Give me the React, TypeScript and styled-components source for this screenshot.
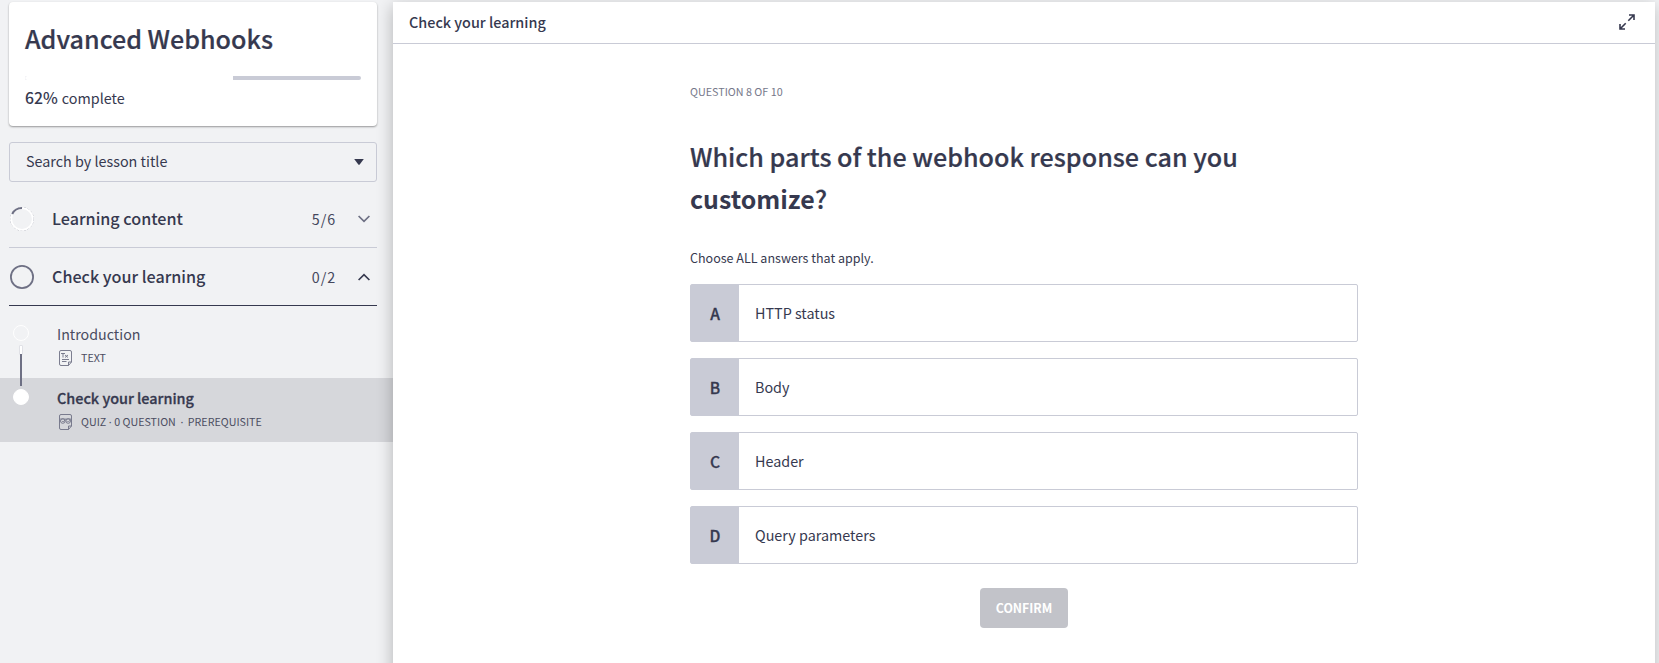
import React from "react";
import styled, { createGlobalStyle } from "styled-components";

const ink = "#36394f";
const soft = "#6e7084";
const line = "#c9cbd6";

const GlobalStyle = createGlobalStyle`
  * { box-sizing: border-box; }
  body {
    margin: 0;
    overflow: hidden;
    background: #f1f2f4;
    color: ${ink};
    font-family: "Noto Sans CJK SC", "Noto Sans", sans-serif;
  }
  h1, h2, p { margin: 0; }
`;

const Page = styled.div`
  display: flex;
  height: 663px;
  width: 1659px;
  overflow: hidden;
`;

const Sidebar = styled.aside`
  width: 393px;
  flex: none;
  padding-top: 2px;
`;

const CourseCard = styled.section`
  width: 368px;
  height: 124px;
  margin-left: 9px;
  padding: 18px 16px 0;
  background: #fff;
  border-radius: 4px;
  box-shadow: 0 1px 2px rgba(0, 0, 0, 0.38);
`;

const CourseTitle = styled.h1`
  font-size: 25.1px;
  font-weight: 500;
  line-height: 36px;
  -webkit-text-stroke: 0.2px ${ink};
`;

const ProgressTrack = styled.div`
  height: 4px;
  margin-top: 20px;
  border-radius: 2px;
  background: ${line};
  overflow: hidden;
`;

const ProgressFill = styled.div`
  height: 100%;
  background: #fff;
`;

const ProgressText = styled.p`
  margin-top: 6px;
  font-size: 14.35px;
  line-height: 24px;
  white-space: pre;
  strong {
    font-size: 15.8px;
    font-weight: 500;
    line-height: 20px;
    margin-right: 4px;
  }
`;

const LessonSelect = styled.div`
  display: flex;
  align-items: center;
  justify-content: space-between;
  width: 368px;
  height: 40px;
  margin: 16px 0 8px 9px;
  padding: 0 12px 2px 16px;
  border: 1px solid ${line};
  border-radius: 3px;
  font-size: 14.35px;
  line-height: 20px;
  svg { position: relative; top: 1px; }
`;

const SectionRow = styled.div<{ $open?: boolean }>`
  display: flex;
  align-items: center;
  width: 368px;
  height: 58px;
  margin-left: 9px;
  padding-right: 7px;
  border-bottom: 1px solid ${(p) => (p.$open ? ink : line)};
  > svg { flex: none; }
`;

const SectionName = styled.span`
  flex: 1;
  margin-left: 18px;
  padding-bottom: 1px;
  font-size: 16.15px;
  font-weight: 500;
  line-height: 24px;
`;

const SectionCount = styled.span`
  margin-right: 22px;
  font-size: 14.3px;
  letter-spacing: 0.9px;
  line-height: 24px;
  color: #45485d;
`;

const LessonList = styled.div`
  padding-top: 8px;
`;

const Lesson = styled.div<{ $active?: boolean }>`
  display: flex;
  height: 64px;
  background: ${(p) => (p.$active ? "#d6d7db" : "transparent")};
`;

const Rail = styled.div<{ $first?: boolean }>`
  display: flex;
  flex-direction: column;
  align-items: center;
  width: 16px;
  margin-left: 13px;
  padding-top: ${(p) => (p.$first ? 11 : 0)}px;
`;

const Dot = styled.div<{ $filled?: boolean; $gap?: number }>`
  flex: none;
  width: 16px;
  height: 16px;
  margin-bottom: ${(p) => p.$gap ?? 0}px;
  border: 1px solid #fff;
  border-radius: 50%;
  background: ${(p) => (p.$filled ? "#fff" : "transparent")};
`;

const Connector = styled.div<{ $h: number; $done?: boolean; $gap?: number }>`
  flex: none;
  width: 2px;
  height: ${(p) => p.$h}px;
  margin-bottom: ${(p) => p.$gap ?? 0}px;
  background: ${(p) => (p.$done ? "#fff" : soft)};
  box-shadow: ${(p) => (p.$done ? "0 0 0 0.5px #cfd0d8" : "none")};
`;

const LessonBody = styled.div`
  padding: 10px 0 0 28px;
`;

const LessonTitle = styled.div<{ $active?: boolean }>`
  font-size: ${(p) => (p.$active ? 14.42 : 14.25)}px;
  font-weight: ${(p) => (p.$active ? 500 : 400)};
  line-height: 20px;
  color: ${(p) => (p.$active ? ink : "#494b60")};
  -webkit-text-stroke: ${(p) => (p.$active ? "0.3px" : "0")} ${ink};
`;

const LessonMeta = styled.div`
  display: flex;
  align-items: center;
  height: 16px;
  margin-top: 6px;
  font-size: 10.7px;
  line-height: 16px;
  color: #4b4d61;
  svg { margin: 0 9px 0 2px; }
`;

const Bullet = styled.span<{ $w: number }>`
  width: ${(p) => p.$w}px;
  text-align: center;
  font-family: "Noto Sans", sans-serif;
`;

const Main = styled.main`
  position: relative;
  width: 1262px;
  height: 680px;
  flex: none;
  margin-top: 2px;
  background: #fff;
  box-shadow: -1px 4px 15px rgba(0, 0, 0, 0.24);
`;

const TopBar = styled.header`
  display: flex;
  align-items: center;
  justify-content: space-between;
  height: 42px;
  padding: 0 20px 2px 16px;
  border-bottom: 1px solid ${line};
  font-size: 14.4px;
  font-weight: 500;
  line-height: 20px;
`;

const Question = styled.section`
  display: flex;
  flex-direction: column;
  width: 668px;
  margin: 40px auto 0;
`;

const QuestionCount = styled.p`
  font-size: 10.75px;
  line-height: 16px;
  color: #76788a;
`;

const QuestionTitle = styled.h2`
  margin-top: 35px;
  font-size: 25.13px;
  font-weight: 500;
  line-height: 42px;
  white-space: nowrap;
  -webkit-text-stroke: 0.2px ${ink};
  b {
    font-size: 24.9px;
    font-weight: 700;
    line-height: 30px;
    -webkit-text-stroke: 0;
  }
`;

const Hint = styled.p`
  margin-top: 29px;
  font-size: 12.53px;
  line-height: 20px;
`;

const Options = styled.div`
  display: flex;
  flex-direction: column;
  gap: 16px;
  margin-top: 16px;
`;

const Option = styled.div`
  display: flex;
  height: 58px;
  border: 1px solid ${line};
  border-radius: 2px;
`;

const OptionKey = styled.div`
  display: flex;
  align-items: center;
  justify-content: center;
  width: 48px;
  background: ${line};
  font-size: 15.6px;
  font-weight: 500;
  line-height: 20px;
  padding-bottom: 1px;
  -webkit-text-stroke: 0.3px ${ink};
`;

const OptionLabel = styled.div`
  display: flex;
  align-items: center;
  padding-left: 16px;
  font-size: 14.35px;
  line-height: 20px;
`;

const ConfirmButton = styled.button`
  align-self: center;
  width: 88px;
  height: 40px;
  margin-top: 24px;
  padding: 0;
  border: 0;
  border-radius: 4px;
  background: #c2c3c9;
  color: #fff;
  font: 700 12.3px/20px "Noto Sans CJK SC", sans-serif;
`;

const Chevron = ({ up }: { up?: boolean }) => (
  <svg width="12" height="8" viewBox="0 0 12 8" fill="none" stroke={up ? ink : soft} strokeWidth="1.7">
    <path d={up ? "M.6 7 6 1.6 11.4 7" : "M.6 1 6 6.4 11.4 1"} />
  </svg>
);

const PartialRing = () => (
  <svg width="25" height="24" viewBox="0 0 25 24" fill="none">
    <circle cx="13" cy="12" r="11.5" stroke="#a9abb8" strokeWidth="1" strokeDasharray="2 1.5" />
    <circle cx="13" cy="12" r="10.8" stroke="#fff" strokeWidth="1.8" />
    <path d="M3.2 7A11 11 0 0 1 13 1" stroke={soft} strokeWidth="2" />
  </svg>
);

const EmptyRing = () => (
  <svg width="25" height="24" viewBox="0 0 25 24" fill="none">
    <circle cx="13" cy="12" r="11.1" stroke={soft} strokeWidth="1.8" />
  </svg>
);

const PageOutline = () => (
  <path d="M12.5 12V2Q12.5.5 11 .5H2Q.5.5.5 2v12Q.5 15.5 2 15.5H9.500L12.500 12H9.500V15.500" />
);

const TextIcon = () => (
  <svg width="13" height="16" viewBox="0 0 13 16" fill="none" stroke={soft} strokeWidth="0.9">
    <PageOutline />
    <path d="M2 3.500h4M4 3.500v4M6 5l3 2.500M9 5 6 7.500M3 9.500h7M3 11.500h4.500" />
  </svg>
);

const QuizIcon = () => (
  <svg width="13" height="16" viewBox="0 0 13 16" fill="none" stroke={soft} strokeWidth="0.9">
    <PageOutline />
    <circle cx="3.800" cy="7" r="2.300" />
    <circle cx="9.200" cy="7" r="2.300" />
    <path d="m3 7 1 1 2.600-2.600M8.300 7l1 1 2.500-2.600M1 5h11" strokeWidth="0.7" />
  </svg>
);

const ExpandIcon = () => (
  <svg width="16" height="16" viewBox="0 0 16 16" fill="none" stroke={ink} strokeWidth="1.6">
    <path d="M9.300 6.700 15 1M10 1h5v5M6.700 9.300 1 15M1 10v5h5" />
  </svg>
);

const options = [
  ["A", "HTTP status"],
  ["B", "Body"],
  ["C", "Header"],
  ["D", "Query parameters"],
];

export default function App() {
  return (
    <>
      <GlobalStyle />
      <Page>
        <Sidebar>
          <CourseCard>
            <CourseTitle>Advanced Webhooks</CourseTitle>
            <ProgressTrack>
              <ProgressFill style={{ width: "62%" }} />
            </ProgressTrack>
            <ProgressText>
              <strong>62%</strong>complete
            </ProgressText>
          </CourseCard>
          <LessonSelect>
            Search by lesson title
            <svg width="10" height="6" viewBox="0 0 10 6">
              <path d="M.2 0h9.600L5.500 5.700Q5 6 4.500 5.700Z" fill={ink} />
            </svg>
          </LessonSelect>
          <SectionRow>
            <PartialRing />
            <SectionName>Learning content</SectionName>
            <SectionCount>5/6</SectionCount>
            <Chevron />
          </SectionRow>
          <SectionRow $open>
            <EmptyRing />
            <SectionName>Check your learning</SectionName>
            <SectionCount>0/2</SectionCount>
            <Chevron up />
          </SectionRow>
          <LessonList>
            <Lesson>
              <Rail $first>
                <Dot $gap={5} />
                <Connector $h={8} $done />
                <Connector $h={24} />
              </Rail>
              <LessonBody>
                <LessonTitle>Introduction</LessonTitle>
                <LessonMeta>
                  <TextIcon />
                  TEXT
                </LessonMeta>
              </LessonBody>
            </Lesson>
            <Lesson $active>
              <Rail>
                <Connector $h={8} $gap={3} />
                <Dot $filled />
              </Rail>
              <LessonBody>
                <LessonTitle $active>Check your learning</LessonTitle>
                <LessonMeta>
                  <QuizIcon />
                  QUIZ<Bullet $w={8}>·</Bullet>0 QUESTION<Bullet $w={12}>·</Bullet>PREREQUISITE
                </LessonMeta>
              </LessonBody>
            </Lesson>
          </LessonList>
        </Sidebar>
        <Main>
          <TopBar>
            Check your learning
            <ExpandIcon />
          </TopBar>
          <Question>
            <QuestionCount>QUESTION 8 OF 10</QuestionCount>
            <QuestionTitle>
              Which parts of the webhook response can you
              <br />
              <b>customize</b>?
            </QuestionTitle>
            <Hint>Choose ALL answers that apply.</Hint>
            <Options>
              {options.map(([key, label]) => (
                <Option key={key}>
                  <OptionKey>{key}</OptionKey>
                  <OptionLabel>{label}</OptionLabel>
                </Option>
              ))}
            </Options>
            <ConfirmButton>CONFIRM</ConfirmButton>
          </Question>
        </Main>
      </Page>
    </>
  );
}
